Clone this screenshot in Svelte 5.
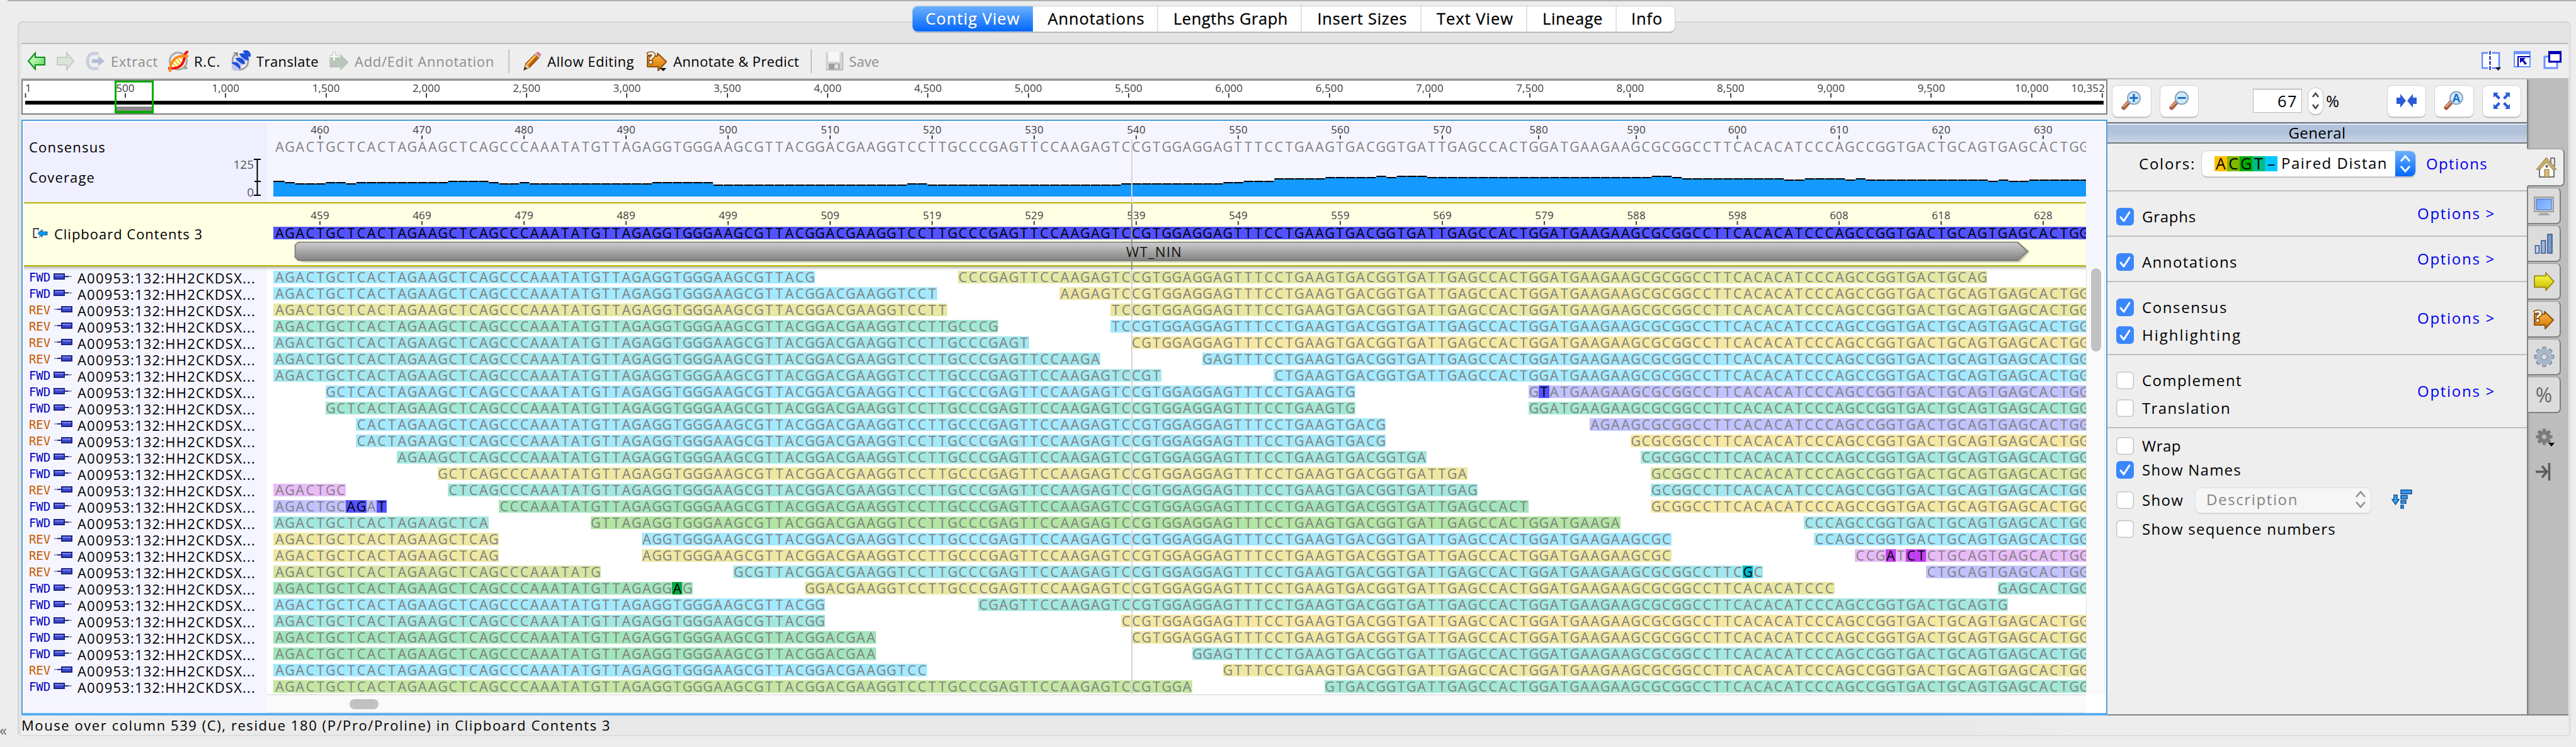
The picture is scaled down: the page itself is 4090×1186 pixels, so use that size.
<script>
  const COL = 16.195;
  const OFFSET = 1.9;
  const TRACK = 2878;
  const consensus =
    'AGACTGCTCACTAGAAGCTCAGCCCAAATATGTTAGAGGTGGGAAGCGTTACGGACGAAGGTCCTTGCCCGAGTTCCAAG' +
    'AGTCCGTGGAGGAGTTTCCTGAAGTGACGGTGATTGAGCCACTGGATGAAGAAGCGCGGCCTTCACACATCCCAGCCGGT' +
    'GACTGCAGTGAGCACTGG';

  const cyan = '#a3e9ff', aqua = '#a3e8ee', teal = '#a3e8e0', mint = '#a3e8d4', green = '#a3e5bb';
  const gold = '#f6e8a3', yellow = '#efe8a3', khaki = '#e9e8a3', lime = '#e2e8a3', leaf = '#b3e5a3';
  const lavender = '#c2c2ff', pink = '#e8bbf8';

  // [direction, ...segments]; a segment is [start, end, colour, mismatches, mismatch colour]
  const reads = [
    ['FWD', [0, 53, cyan], [67, 168, lime]],
    ['FWD', [0, 65, cyan], [77, 178, yellow]],
    ['REV', [0, 66, khaki], [82, 178, khaki]],
    ['REV', [0, 71, mint], [82, 178, cyan]],
    ['REV', [0, 74, aqua], [84, 178, gold]],
    ['REV', [0, 81, aqua], [91, 178, cyan]],
    ['FWD', [0, 87, aqua], [98, 178, cyan]],
    ['FWD', [5, 106, cyan], [123, 178, lavender, { 124: 'T' }, '#5252ff']],
    ['FWD', [5, 106, mint], [123, 178, '#a3e8cf']],
    ['REV', [8, 109, cyan], [129, 178, lavender]],
    ['REV', [8, 109, '#a4e9f8'], [133, 178, gold]],
    ['FWD', [12, 113, teal], [134, 178, teal]],
    ['FWD', [16, 117, yellow], [135, 178, '#dde8a3']],
    ['REV', [0, 7, pink], [17, 118, teal], [135, 178, aqua]],
    ['FWD', [0, 11, lavender, { 7: 'A', 8: 'G', 10: 'T' }, '#5252ff'], [22, 123, green], [135, 178, gold]],
    ['FWD', [0, 21, teal], [31, 132, leaf], [150, 178, aqua]],
    ['REV', [0, 22, yellow], [36, 137, cyan], [151, 178, cyan]],
    ['REV', [0, 22, yellow], [36, 137, yellow], [155, 178, pink, { 158: 'A', 160: 'C', 161: 'T' }, '#c23ff0']],
    ['REV', [0, 32, '#d8e6a3'], [45, 146, aqua, { 144: 'G' }, '#00b9cc'], [162, 178, lavender]],
    ['FWD', [0, 41, green, { 39: 'A' }, '#00aa44'], [52, 153, khaki], [169, 178, teal]],
    ['FWD', [0, 54, cyan], [69, 170, teal]],
    ['FWD', [0, 54, teal], [83, 178, gold]],
    ['FWD', [0, 59, green], [84, 178, yellow]],
    ['FWD', [0, 59, green], [90, 178, '#a3e8e4']],
    ['REV', [0, 64, cyan], [93, 178, yellow]],
    ['FWD', [0, 90, '#c5e6a3'], [103, 178, mint]]
  ].map(([dir, ...segs]) => {
    let at = 0;
    return {
      dir,
      segs: segs.map(([start, end, color, marks = {}, markColor]) => {
        const gap = start === 0 ? 0 : (start - at) * COL + (at === 0 ? OFFSET : 0);
        const lead = start === 0 ? OFFSET : 0;
        at = end;
        // reads that reach the edge of the view carry on over the last, partly visible column
        const letters = [...consensus.slice(start, end)].map((ch, k) => ({
          ch: marks[start + k] ?? ch,
          mark: start + k in marks
        }));
        return { gap, lead, color, markColor, letters };
      })
    };
  });

  // coverage steps: [end column, y of the step's top]
  const steps = [
    [1, 287], [2, 289], [5, 291], [7, 289], [8, 291], [17, 289], [21, 287], [22, 289], [24, 291], [25, 289],
    [37, 291], [43, 289], [62, 293], [64, 291], [83, 293], [93, 291], [95, 289], [98, 287], [103, 283],
    [108, 281], [109, 279], [110, 281], [113, 279], [135, 281], [137, 279], [138, 281], [148, 283], [150, 285],
    [154, 283], [155, 285], [156, 283], [168, 285], [169, 287], [170, 285], [172, 287], [178, 285]
  ];
  const coverage = [];
  steps.forEach(([end, y]) => {
    while (coverage.length < end) coverage.push(y - 243);
  });
  const area =
    'M0 69' + coverage.map((y, i) => `V${y + 1}H${(OFFSET + (i + 1) * COL).toFixed(1)}`).join('') + 'V69Z';

  const tickX = [74, 236, 398, 560, 722, 884, 1046, 1208, 1370, 1532, 1694, 1856, 2009, 2164, 2324.5, 2486, 2648, 2810];
  const topTicks = tickX.map((x, i) => [x, 460 + i * 10]);
  const refTicks = tickX.map((x, i) => [i === 12 ? 2018 : x, i < 13 ? 459 + i * 10 : 588 + (i - 13) * 10]);

  const overview = [];
  for (let n = 500; n <= 10000; n += 500) overview.push([4 + (n - 1) * 0.3186, n.toLocaleString('en-US')]);

  const tabs = [
    ['Contig View', 191, 150], ['Annotations', 199, 154], ['Lengths Graph', 228, 182], ['Insert Sizes', 190, 143],
    ['Text View', 168, 122], ['Lineage', 142, 96], ['Info', 92, 50]
  ];

  const sections = [
    { rows: [['Graphs', 86, true]] },
    { rows: [['Annotations', 152, true]] },
    { rows: [['Consensus', 136, true], ['Highlighting', 158, true]] },
    { rows: [['Complement', 159, false], ['Translation', 141, false]] }
  ];

  const gearTeeth = [0, 45, 90, 135, 180, 225, 270, 315];

  // spreads a label's letters so that it fills the given width
  function fit(node, width) {
    const natural = node.getBoundingClientRect().width;
    node.style.letterSpacing = `${(width - natural) / node.textContent.length}px`;
  }
</script>

{#snippet label(text, width, cls = '')}
  <span class="fit {cls}" use:fit={width}>{text}</span>
{/snippet}

{#snippet checkbox(on)}
  <span class="check" class:on>
    {#if on}
      <svg width="28" height="28" viewBox="0 0 28 28"><path d="M7 15 L12 21 L21 7" fill="none" stroke="#fff" stroke-width="3" stroke-linecap="round" stroke-linejoin="round" /></svg>
    {/if}
  </span>
{/snippet}

{#snippet sequence(text)}
  {#each text as ch}<i>{ch}</i>{/each}
{/snippet}

{#snippet lens(sign)}
  <svg width="34" height="32" viewBox="0 0 34 32">
    <path d="M5 27 L13 18" stroke="#a85a3c" stroke-width="7" stroke-linecap="round" />
    <path d="M5 25 L12 18" stroke="#d99a7c" stroke-width="3" stroke-linecap="round" />
    <circle cx="21" cy="11.500" r="10" fill="#cfe9ff" stroke="#8ba3bd" stroke-width="2" />
    {#if sign === 'A'}
      <text x="21" y="18" text-anchor="middle" class="lens-a">A</text>
    {:else}
      <path d={sign === '+' ? 'M14.500 11.500h13M21 5v13' : 'M14.500 11.500h13'} stroke="#1c6fc4" stroke-width="3" />
    {/if}
  </svg>
{/snippet}

{#snippet predict(w, menu)}
  <svg width={w} height="34" viewBox="0 0 34 34">
    <path d="M2 9h16V4.500L32 18 19 32v-6H2z" fill="url(#orange)" stroke="#8a5210" stroke-width="2" stroke-linejoin="round" />
    <text x="2" y="21" class="q">?</text>
    {#if menu}<path d="M22 28h10l-5 5z" />{/if}
  </svg>
{/snippet}

{#snippet gear(fill, edge, size)}
  <svg width={size} height={size} viewBox="-16 -16 32 32">
    <g fill={edge}>
      {#each gearTeeth as a}<path d="M-3.800 -9 L-2.800 -15.500 H2.800 L3.800 -9Z" transform="rotate({a})" />{/each}
    </g>
    <circle r="8" fill="none" stroke={fill} stroke-width="6.500" />
    <circle r="4.500" fill="none" stroke={edge} stroke-width="1" />
    <g fill={fill}>
      {#each gearTeeth as a}<path d="M-2.500 -9 L-2 -14 H2 L2.500 -9Z" transform="rotate({a})" />{/each}
    </g>
  </svg>
{/snippet}

<div class="app">
  <svg class="defs" width="0" height="0">
    <defs>
      <linearGradient id="orange" x2="0" y2="1"><stop offset="0" stop-color="#ffb84a" /><stop offset="1" stop-color="#d27200" /></linearGradient>
      <linearGradient id="greenArrow" x2="1" y2="1"><stop offset="0" stop-color="#d9ffd6" /><stop offset="0.500" stop-color="#a4f09c" /><stop offset="1" stop-color="#48cc48" /></linearGradient>
      <linearGradient id="yellowArrow" x2="0" y2="1"><stop offset="0" stop-color="#ffff50" /><stop offset="1" stop-color="#c8b800" /></linearGradient>
      <linearGradient id="greyBar" x2="0" y2="1"><stop offset="0" stop-color="#cdcdcd" /><stop offset="1" stop-color="#828282" /></linearGradient>
      <linearGradient id="screen" x2="1" y2="1"><stop offset="0" stop-color="#6ba2ff" /><stop offset="1" stop-color="#9cc4ff" /></linearGradient>
      <linearGradient id="bars" x2="1" y2="0"><stop offset="0" stop-color="#c8dcf5" /><stop offset="1" stop-color="#6d8fc4" /></linearGradient>
    </defs>
  </svg>
  <div class="topline"></div>
  <nav class="tabs">
    {#each tabs as [name, width, textWidth], i}
      <div class="tab" class:active={i === 0} style:width="{width}px">{@render label(name, textWidth)}</div>
    {/each}
  </nav>

  <section class="panel">
    <div class="toolbar">
      <svg width="30" height="30" viewBox="0 0 30 30"><path d="M2 15 13 2v7h15v12H13v7z" fill="url(#greenArrow)" stroke="#108c1c" stroke-width="2" /></svg>
      <svg width="30" height="30" viewBox="0 0 30 30"><path d="M28 15 17 2v7H2v12h15v7z" fill="#dbe5db" stroke="#c2cec2" stroke-width="2" /></svg>
      <div class="tool dim">
        <svg width="32" height="32" viewBox="0 0 32 32"><path d="M19 6.500V4H12Q4 6 4 16t8 12h7v-2.500" fill="none" stroke="#c9cfde" stroke-width="5" /><path d="M11 13h10V8l10 8-10 8v-5H11z" fill="#b4bfd6" /></svg>
        {@render label('Extract', 75)}
      </div>
      <div class="tool">
        <svg width="32" height="34" viewBox="0 0 32 34"><circle cx="16" cy="17" r="13.500" fill="none" stroke="#a9a9a9" stroke-width="3" /><path d="M26 23l6 6-7 1z" fill="#a0a0a0" /><path d="M4 30C4 14 13 9 28 9 26 24 18 29 4 30z" fill="#fff" /><path d="M9 15l12 12M14 12l10 11M19 10l7 8M7 20l8 9" stroke="#ffcf20" stroke-width="2.500" /><path d="M0 28.500h8C19 28 25 21 26 10c0-5 2-7 6-8" fill="none" stroke="#f01010" stroke-width="4" /><path d="M3 34C3 17 12 9 23 9h9" fill="none" stroke="#ff8a1c" stroke-width="4" /></svg>
        {@render label('R.C.', 42)}
      </div>
      <div class="tool">
        <svg width="32" height="34" viewBox="0 0 32 34"><path d="M6 24A13 13 0 0 1 8 6M25 9a13 13 0 0 1-13 21" fill="none" stroke="#a3a3a3" stroke-width="3" /><path d="M4 3h8v8z" fill="#8f8f8f" /><path d="M8 26 25 7" stroke="#c0c4ee" stroke-width="13" stroke-linecap="round" /><path d="M3 20c7-2 11 2 12 8-3-1-4-5-12-8zM9 13c8-2 12 2 13 8-4 0-8-3-13-8zM15 6c7-2 13 2 13 9-4 0-9-4-13-9zM21 1c5-2 11 2 10 8-4 0-7-3-10-8z" fill="#1c50d8" stroke="#1c50d8" stroke-width="2" stroke-linejoin="round" /></svg>
        {@render label('Translate', 99)}
      </div>
      <div class="tool dim">
        <svg width="32" height="34" viewBox="0 0 34 34"><path d="M2 12h18V6l13 13-13 13v-5H2z" fill="#bac6ba" stroke="#b3beb3" /><path d="M9 1v16M2 9h14" stroke="#c0c8c0" stroke-width="5" /><path d="M9 2v14M3 9h12" stroke="#fff" stroke-width="2.500" /></svg>
        {@render label('Add/Edit Annotation', 222)}
      </div>
      <div class="rule"></div>
      <div class="tool">
        <svg width="29" height="30" viewBox="0 0 29 30"><path d="M1 29 4 19 19 4l6 5L10 25z" fill="#f0951f" stroke="#8a4a10" stroke-width="1.500" /><path d="m8 24 14-16" stroke="#b85808" stroke-width="3" /><path d="m6 20 13-14" stroke="#ffc860" stroke-width="2.500" /><path d="m18 4 2-2 7 5-2 3z" fill="#b9bcc8" /><path d="m20 2 3-2 5 4-1 4z" fill="#ee6a7c" /><path d="M4 20l6 5-9 4z" fill="#e8c8a0" /><path d="M1 29l1-5 4 3z" fill="#222" /></svg>
        {@render label('Allow Editing', 138)}
      </div>
      <div class="tool predict">
        {@render predict(34, true)}
        {@render label('Annotate & Predict', 200)}
      </div>
      <div class="rule tight"></div>
      <div class="tool dim">
        <svg width="29" height="30" viewBox="0 0 29 30"><path d="M1 1h27v28H3l-2-2z" fill="#d4d4d4" /><path d="M28 1v28H1" fill="none" stroke="#bdbdbd" stroke-width="2" /><path d="M5 1h18v15H5z" fill="#f6f6f6" /><path d="M6 19h17v9H6z" fill="#9f9f9f" /><path d="M15 20h6v7h-6z" fill="#e2e2e2" /></svg>
        {@render label('Save', 48)}
      </div>
      <div class="window-icons">
        <svg width="31" height="32" viewBox="0 0 31 32"><path d="M1 3h27v24H1z" fill="#fff" stroke="#5c86ff" stroke-width="2.500" /><path d="M13.500 0v30" stroke="#fff" stroke-width="6" /><path d="M13.500 0v31" stroke="#0000a0" stroke-width="2" stroke-dasharray="6 2" /><path d="M22 26h9l-4.500 5z" /></svg>
        <svg width="27" height="28" viewBox="0 0 27 28"><path d="M1 2h25v23H1z" fill="#fff" stroke="#6a92ff" stroke-width="2" /><path d="M0 0h27v5H0z" fill="#6a92ff" /><path d="M7 25V9h19" fill="none" stroke="#0000b4" stroke-width="2" /><path d="M10 11h9l-3 3 5 6-3 2-4-6-4 3z" fill="#0000b4" /></svg>
        <svg width="30" height="30" viewBox="0 0 30 30"><path d="M2 9h20v18H2z" fill="#fff" stroke="#6a92ff" stroke-width="3" /><path d="M9.500 2h18v15h-18z" fill="#fff" stroke="#0000b4" stroke-width="3" /><path d="M8 0h21v5H8z" fill="#0000b4" /></svg>
      </div>
    </div>

    <div class="main">
      <div class="viewer">
        <div class="overview">
          <svg width="3308" height="52">
            <path d="M4 32h3300v6H4z" />
            <path d="M148 42h59v7h-59z" fill="#8c8c8c" stroke="#666" />
            <text x="4" y="18">1</text>
            <path d="M4.500 20v7" class="tick" />
            {#each overview as [x, n]}
              <text {x} y="18" text-anchor="middle">{n}</text>
              <path d="M{Math.round(x)} 20v7" class="tick" />
            {/each}
            <text x="3306" y="18" text-anchor="end">10,352</text>
            <path d="M3302 20v7" class="tick" />
            <path d="M147.500 1.500h59v48.500h-59z" fill="none" stroke="#00aa00" stroke-width="3" />
            <path d="M146 48h62v4h-62z" fill="#00aa00" />
          </svg>
        </div>

        <div class="alignment">
          <div class="cursor"></div>
          <div class="band consensus">
            <div class="names">
              <div class="titles">
                {@render label('Consensus', 122)}
                {@render label('Coverage', 105)}
              </div>
              <svg width="54" height="127">
                <text x="33" y="74" text-anchor="end" class="axis">125</text>
                <text x="33" y="117.500" text-anchor="end" class="axis">0</text>
                <path d="M33 59h11M38.500 59v57M34 94h10M33 116h11" stroke="#000" stroke-width="2" fill="none" />
              </svg>
            </div>
            <div class="track">
              <svg width={TRACK} height="29">
                {#each topTicks as [x, n]}
                  <text {x} y="18" text-anchor="middle">{n}</text>
                  <path d="M{x} 21v6" class="tick" />
                {/each}
              </svg>
              <div class="seq">{@render sequence(consensus)}</div>
              <svg width={TRACK} height="69">
                <path d={area} fill="#1399ff" />
                {#each coverage as y, i}
                  <path d="M{i === 0 ? 0 : OFFSET + i * COL + 0.5} {y + 1}H{OFFSET + (i + 1) * COL - 0.5}" stroke="#000" stroke-width="2" />
                {/each}
              </svg>
            </div>
          </div>

          <div class="band reference">
            <div class="names">
              <svg width="24" height="18" viewBox="0 0 24 18"><path d="M10 1H1.500v14H7" fill="#fff" stroke="#444" stroke-width="2" /><path d="M9 2v3M11 12v4" stroke="#aaa" stroke-width="2" /><path d="M8 8.500l7-6v3.500h8v5h-8v3.500z" fill="#0c9bff" stroke="#06518c" /></svg>
              {@render label('Clipboard Contents 3', 236)}
            </div>
            <div class="track">
              <svg width={TRACK} height="37">
                {#each refTicks as [x, n]}
                  <text {x} y="25" text-anchor="middle">{n}</text>
                  <path d="M{x} 28v6" class="tick" />
                {/each}
              </svg>
              <div class="seq">{@render sequence(consensus)}</div>
              <svg width={TRACK} height="41">
                <path d="M38 11l6-5H2773l16 14-16 17H46l-8-8z" fill="#d8d8bc" />
                <path d="M36 9l6-5H2771l17 15-16 16H43l-7-7z" fill="#b4b49c" />
                <path d="M34.500 9l5-4.500H2769L2784.500 19 2769 33.500H39.500l-5-5z" fill="url(#greyBar)" stroke="#747474" stroke-width="1.500" />
                <text x="1398" y="28" text-anchor="middle" class="feature" textLength="88">WT_NIN</text>
              </svg>
            </div>
            <div class="side"></div>
          </div>

          <div class="reads">
            <div class="names">
              {#each reads as { dir }}
                <div class="name">
                  <span class="dir" class:rev={dir === 'REV'}>{@render label(dir, 34)}</span>
                  <svg width="30" height="10" viewBox="0 0 30 10" class:flip={dir === 'REV'}>
                    <path d="M18 5h6" stroke="#2a2a80" stroke-width="2" /><path d="M24 5h5" stroke="#9a9ac4" stroke-width="2" /><path d="M1 1h16v8H1z" fill="#3b48cc" stroke="#1c2488" stroke-width="2" /><path d="M2 3h14" stroke="#7c86f0" stroke-width="2" />
                  </svg>
                  {@render label('A00953:132:HH2CKDSX...', 283)}
                </div>
              {/each}
            </div>
            <div class="rows">
              {#each reads as { segs }}
                <div class="row">
                  {#each segs as s}
                    <div class="seg" style:margin-left="{s.gap}px" style:padding-left="{s.lead}px" style:background={s.color}>
                      {#each s.letters as l}{#if l.mark}<i class="mark" style:background={s.markColor}>{l.ch}</i>{:else}<i>{l.ch}</i>{/if}{/each}
                    </div>
                  {/each}
                </div>
              {/each}
            </div>
            <div class="vscroll"><div></div></div>
          </div>
          <div class="bottom">
            <div class="blank"></div>
            <div class="hscroll"><div></div></div>
            <div class="corner"></div>
          </div>
        </div>
      </div>

      <aside class="options">
        <div class="zoombar">
          <div class="btn">{@render lens('+')}</div>
          <div class="btn">{@render lens('-')}</div>
          <div class="percent">{@render label('67', 32)}</div>
          <div class="spinner"><svg width="23" height="40" viewBox="0 0 23 40"><path d="m7 14 4.500-6L16 14M7 26l4.500 6 4.500-6" fill="none" stroke="#444" stroke-width="2.500" /></svg></div>
          {@render label('%', 20)}
          <div class="push"></div>
          <div class="btn"><svg width="34" height="28" viewBox="0 0 34 28"><path d="M1 9h6V3l9 11-9 11v-6H1zM33 9h-6V3l-9 11 9 11v-6h6z" fill="#2a5bd8" /></svg></div>
          <div class="btn">{@render lens('A')}</div>
          <div class="btn"><svg width="28" height="28" viewBox="0 0 28 28"><path d="M1 1h8L6.500 3.500 12 9l-3 3-5.500-5.500L1 9zM27 1h-8l2.500 2.500L16 9l3 3 5.500-5.500L27 9zM1 27h8l-2.500-2.500L12 19l-3-3-5.500 5.500L1 19zM27 27h-8l2.500-2.500L16 19l3-3 5.500 5.500L27 19z" fill="#2a5bd8" /></svg></div>
        </div>
        <div class="heading">{@render label('General', 91)}</div>
        <div class="colors">
          {@render label('Colors:', 90)}
          <div class="select">
            <div class="swatches"><b>A</b><b>C</b><b>G</b><b>T</b><b>–</b></div>
            <div class="clip">{@render label('Paired Distance', 197)}</div>
            <div class="arrows"><svg width="32" height="40" viewBox="0 0 32 40"><path d="m9 16 7-8 7 8M9 24l7 8 7-8" fill="none" stroke="#fff" stroke-width="3" /></svg></div>
          </div>
          {@render label('Options', 98, 'link')}
        </div>
        {#each sections as { rows }}
          <div class="section">
            <div class="checks">
              {#each rows as [name, width, on]}
                <div class="line">{@render checkbox(on)}{@render label(name, width)}</div>
              {/each}
            </div>
            {@render label('Options >', 124, 'link')}
          </div>
        {/each}
        <div class="section last">
          <div class="line">{@render checkbox(false)}{@render label('Wrap', 62)}</div>
          <div class="line">{@render checkbox(true)}{@render label('Show Names', 158)}</div>
          <div class="line show">
            {@render checkbox(false)}{@render label('Show', 66)}
            <div class="select disabled">
              {@render label('Description', 146)}
              <svg width="18" height="30" viewBox="0 0 18 30"><path d="m2 11 7-8 7 8M2 19l7 8 7-8" fill="none" stroke="#8e8e8e" stroke-width="2.500" /></svg>
            </div>
            <svg width="34" height="32" viewBox="0 0 34 32"><g fill="#3a97e8" stroke="#0b4f9c" stroke-width="1.500"><path d="M15 1h17v6H15zM15 9.500h10v5.500H15zM15 17.500h8V22h-8zM15 25h4v5h-4z" /><path d="M4 9h5v7h3l-5.500 8L1 16h3z" fill="#32a8f0" /></g></svg>
          </div>
          <div class="line">{@render checkbox(false)}{@render label('Show sequence numbers', 308)}</div>
        </div>
      </aside>

      <div class="strip">
        <div class="side-tab home">
          <svg width="34" height="34" viewBox="0 0 34 34"><path d="M24 2h6v12h-6z" fill="#eee" stroke="#555" stroke-width="1.500" /><path d="M6 17v15h23V17L17 6z" fill="#fff" stroke="#444" stroke-width="1.500" /><path d="M1 20 17 1l16 19h-6L17 9 7 20z" fill="#c9ae6a" stroke="#8c7434" /><path d="M14 20h7v12h-7z" fill="#d6bc7a" stroke="#8c7434" /><path d="M16 13h3v4h-3z" fill="#555" /></svg>
        </div>
        <div class="side-tab"><svg width="32" height="32" viewBox="0 0 32 32"><path d="M1 2h30v23H1z" fill="#d2d2d2" stroke="#8a8a8a" stroke-width="1.500" /><path d="M4 5h24v17H4z" fill="url(#screen)" stroke="#3c6cc8" /><path d="M10 27h12l4 4H6z" fill="#a8a8a8" /></svg></div>
        <div class="side-tab"><svg width="30" height="32" viewBox="0 0 30 32"><g fill="url(#bars)" stroke="#34548c" stroke-width="1.500"><path d="M1.500 19h6v12h-6zM11 11h6.500v20H11zM21 1h7v30h-7z" /></g></svg></div>
        <div class="side-tab"><svg width="33" height="30" viewBox="0 0 33 30"><path d="M1 6h18V1l13 14-13 14v-5H1z" fill="url(#yellowArrow)" stroke="#8c7c00" stroke-width="1.500" /></svg></div>
        <div class="side-tab">{@render predict(34, false)}</div>
        <div class="side-tab">{@render gear('#a9b9cc', '#76879c', 33)}</div>
        <div class="side-tab pct">%</div>
        <div class="tools">
          <div class="gear-menu">{@render gear('#7c7c7c', '#7c7c7c', 27)}<svg class="caret" width="10" height="6"><path d="M0 0h10L5 6z" /></svg></div>
          <svg width="24" height="28" viewBox="0 0 24 28"><path d="M0 14h16M10 5l8 9-8 9M21.500 0v28" fill="none" stroke="#5c5c5c" stroke-width="3.500" /></svg>
        </div>
      </div>
    </div>

    <footer>{@render label('Mouse over column 539 (C), residue 180 (P/Pro/Proline) in Clipboard Contents 3', 936)}</footer>
  </section>
  <div class="collapse">«</div>
</div>

<style>
  :global(body) { background: #ededed; overflow: hidden; }
  .app {
    width: 4090px; height: 1186px; overflow: hidden; position: relative; background: #ededed;
    font: 22px/24px "Open Sans", "Noto Sans", sans-serif; color: #000;
  }
  svg { display: block; flex: none; }
  .defs { position: absolute; }
  .fit { display: inline-block; white-space: pre; flex: none; }
  .topline { height: 2px; margin-left: 12px; background: #b0b0b0; }

  .tabs {
    position: relative; z-index: 1; display: flex; box-sizing: border-box; width: 1210px; height: 40px;
    margin: 8px 0 0 1449px; background: #fff; border-radius: 8px; overflow: hidden;
    box-shadow: 0 0 0 1px #cfcfcf, 0 2px 1px #a5a5a5; font-size: 25.5px; line-height: 39px;
  }
  .tab { box-sizing: border-box; display: flex; justify-content: center; padding-left: 4px; border-right: 2px solid #e2e2e2; -webkit-text-stroke: 0.3px; }
  .tab:last-child { border-right: 0; }
  .tab.active { padding-left: 0; color: #fff; background: linear-gradient(#6cb0fd, #0067ff); border-right: 0; text-shadow: 0 1px 1px rgba(0, 0, 60, 0.4); }

  .panel {
    box-sizing: border-box; width: 4054px; height: 1135px; margin: -16px 0 0 28px; padding: 32px 2px 0 4px;
    border: 2px solid #d3d3d3; border-right-color: #dedede; border-bottom-color: #dcdcdc; border-radius: 8px; background: #e4e4e4;
  }
  .toolbar {
    box-sizing: border-box; display: flex; align-items: center; gap: 16px; height: 58px; padding: 0 10px 0 9px;
    border-top: 2px solid #bdbdbd; border-bottom: 2px solid #bdbdbd; background: #eee;
  }
  .tool { display: flex; align-items: center; gap: 9px; white-space: nowrap; }
  .dim { color: #8c8c8c; }
  .predict { margin-left: 3px; }
  .rule { width: 2px; height: 38px; margin: 0 6px; background: #c2c2c2; }
  .rule.tight { margin: 0 5px 0 2px; }
  .window-icons { display: flex; gap: 20px; margin-left: auto; }

  .main { display: grid; grid-template-columns: 3312px 666px 66px; height: 1010px; background: #eee; }
  .viewer { display: flex; flex-direction: column; gap: 8px; }
  .overview { height: 52px; border: 2px solid #808080; background: #fff; }
  svg text { font-size: 17px; fill: #3c3c3c; letter-spacing: 0.1px; }
  svg text.axis { font-size: 19px; fill: #555; letter-spacing: 0; }
  svg text.feature { font-size: 22px; fill: #111; }
  svg text.q { font: bold 25px "Open Sans", sans-serif; fill: #fff; stroke: #8a5210; stroke-width: 3px; paint-order: stroke; }
  svg text.lens-a { font: bold 18px "Open Sans", sans-serif; fill: #1c6fc4; }
  .tick { stroke: #444; stroke-width: 2; fill: none; }

  .alignment { position: relative; box-sizing: border-box; height: 946px; padding: 2px 2px 0; border: 2px solid #4c9fe0; border-bottom: 4px solid #5baef0; background: #fff; }
  .cursor { position: absolute; z-index: 2; left: 1760px; top: 29px; width: 2px; height: 881px; background: linear-gradient(#d4d4d8 102px, #8e8e8e 102px, #8e8e8e 207px, #d4d4d8 207px); }
  .band { display: grid; grid-template-columns: 386px 2888px 30px; }
  .band .track { padding-left: 10px; overflow: hidden; }
  .consensus { height: 127px; background: #f5f5ff; }
  .consensus .names { display: flex; justify-content: space-between; background: #efefff; }
  .titles { display: flex; flex-direction: column; align-items: flex-start; gap: 24px; padding: 27px 0 0 8px; }
  .seq { display: flex; height: 20px; padding-left: 1.9px; line-height: 20px; color: #808080; }
  i { flex: 0 0 16.195px; width: 16.195px; display: flex; justify-content: center; font-style: normal; font-size: 21.5px; }
  .reference { height: 102px; }
  .reference .names, .reference .track { box-sizing: border-box; height: 102px; background: #ffffe4; border-top: 2px solid #b3b300; border-bottom: 2px solid #b3b300; }
  .reference .names { display: flex; align-items: center; gap: 10px; padding-left: 14px; padding-bottom: 2px; }
  .reference .seq { background: #5252ff; color: #000; }
  .side { background: #f5f5ff; }

  .reads { position: relative; display: grid; grid-template-columns: 386px 2888px 30px; height: 679px; overflow: hidden; }
  .reads .names { padding: 7px 0 0 8px; background: linear-gradient(#b8b8b8, #f5f5ff 6px); }
  .name { display: flex; height: 26px; line-height: 23px; }
  .name svg { margin: 4px 8px 0 5px; }
  .flip { transform: scaleX(-1); }
  .dir { width: 34px; height: 20px; overflow: hidden; font: 19px/20px "DejaVu Sans Mono", monospace; color: #0000c0; }
  .dir.rev { color: #c85a00; }
  .rows { padding: 7px 0 0 10px; overflow: hidden; background: linear-gradient(#b8b8b8, #fff 6px); }
  .row { display: flex; height: 20px; margin-bottom: 6px; line-height: 20px; color: #808080; }
  .seg { display: flex; flex: none; }
  .mark { color: #000; }
  .vscroll { padding: 3px 7px; background: #fafafa; border-left: 1px solid #e4e4e4; border-right: 1px solid #e8e8e8; box-sizing: border-box; }
  .vscroll div { width: 16px; height: 132px; border-radius: 8px; background: #c1c1c1; }
  .bottom { display: grid; grid-template-columns: 386px 2888px 30px; height: 30px; }
  .blank { background: #f5f5ff; }
  .hscroll { box-sizing: border-box; padding: 6px 0 0 131px; background: #fafafa; border-top: 2px solid #e6e6e6; border-bottom: 2px solid #ececec; }
  .hscroll div { width: 46px; height: 16px; border-radius: 8px; background: #c1c1c1; }
  .corner { background: #fff; }

  .options { display: flex; flex-direction: column; font-size: 24px; border-bottom: 2px solid #808080; background: #eee; box-sizing: border-box; }
  .zoombar { display: flex; align-items: center; box-sizing: border-box; height: 68px; padding: 0 10px 0 8px; gap: 15px; font-size: 25.5px; }
  .btn { display: grid; place-items: center; width: 60.5px; height: 49px; border-radius: 8px; background: #fff; box-shadow: 0 0 0 1px #d0d0d0, 0 2px 1px #b0b0b0; }
  .percent { display: flex; justify-content: flex-end; box-sizing: border-box; width: 78px; height: 38px; margin-left: 72px; padding: 0 6px; border: 1px solid #bbb; border-top-color: #999; background: #fff; line-height: 36px; }
  .spinner { width: 23px; height: 41px; margin: 0 -10px 0 -5px; border-radius: 11px; background: #fff; box-shadow: 0 0 0 1px #c8c8c8, 0 2px 1px #b0b0b0; }
  .push { flex: 1; }
  .heading { display: flex; justify-content: center; box-sizing: border-box; height: 34px; line-height: 29px; border-top: 2px solid #5f6b7c; border-bottom: 2px solid #74787e; background: linear-gradient(#e8eef6 2px, #b0c3db 2px, #b0c3db 50%, #cbd6e6); }
  .colors { display: flex; align-items: center; box-sizing: border-box; height: 76px; padding: 0 0 10px 50px; gap: 10px; border-bottom: 2px solid #bfbfbf; }
  .select { display: flex; align-items: center; box-sizing: border-box; width: 339px; height: 40px; padding-left: 20px; border-radius: 8px; overflow: hidden; background: #fff; box-shadow: 0 0 0 1px #cfcfcf, 0 2px 1px #b0b0b0; }
  .colors .select { flex: none; }
  .colors :global(.link) { margin-left: 7px; }
  .swatches { display: flex; height: 24px; line-height: 22px; margin-bottom: 1px; font-size: 25px; }
  .swatches b { display: flex; justify-content: center; width: 20px; font-weight: 400; }
  .swatches b:nth-child(1) { background: #ffc000; }
  .swatches b:nth-child(2) { background: #80b800; }
  .swatches b:nth-child(3) { background: #00ac00; }
  .swatches b:nth-child(4) { background: #00bb80; }
  .swatches b:nth-child(5) { background: #00c8ff; }
  .clip { width: 169px; margin: 0 12px 3px 6px; overflow: hidden; white-space: nowrap; line-height: 30px; }
  .arrows { background: linear-gradient(#6cb0fd, #0067ff); }
  .link { color: #0000ee; }
  .section { display: flex; justify-content: space-between; align-items: center; box-sizing: border-box; padding: 26px 50px 16px 14px; border-bottom: 2px solid #bfbfbf; }
  .section > .link { margin-top: -10px; }
  .checks { display: flex; flex-direction: column; gap: 16px; }
  .line { display: flex; align-items: center; gap: 13px; height: 28px; }
  .section.last { flex-direction: column; justify-content: flex-start; align-items: flex-start; gap: 10px; padding: 14px 0 0 14px; border: 0; }
  .show { margin: 10px 0 8px; }
  .select.disabled { width: 278px; height: 39px; margin-left: 6px; padding: 0 7px 3px 17px; justify-content: space-between; background: #f6f6f6; color: #858585; box-shadow: 0 0 0 1px #dcdcdc, 0 2px 1px #cfcfcf; }
  .show > svg { margin: -2px 0 0 20px; }
  .check { width: 28px; height: 28px; border-radius: 6px; background: #fff; box-shadow: inset 0 0 0 1.5px #c4c4c4; }
  .check.on { background: #3b87fd; box-shadow: none; }

  .strip { box-sizing: border-box; padding-top: 110px; background: linear-gradient(90deg, #808080 2px, #a8a8a8 2px, #b4b4b4 5px, #bdbdbd 5px); border-bottom: 2px solid #808080; }
  .side-tab { display: grid; place-items: center; box-sizing: border-box; width: 54px; height: 58px; margin-top: 2px; border: 2px solid #808080; border-top: 1px solid #999; border-radius: 0 7px 7px 0; background: #dcdcdc; }
  .side-tab.home { width: 60px; height: 60px; margin-top: 0; border-left-color: #eee; background: #eee; padding-left: 2px; }
  .pct { font-size: 32px; color: #666; }
  .tools { display: flex; flex-direction: column; gap: 28px; padding: 24px 0 0 14px; }
  .gear-menu { position: relative; width: 27px; height: 27px; }
  .caret { position: absolute; left: 20px; top: 23px; }

  footer { height: 31px; line-height: 31px; background: linear-gradient(90deg, #efefef, #e8e8e8 600px, #e8e8e8 3000px, #ededed 3300px); }
  .collapse { margin-top: -20px; font-size: 24px; color: #666; line-height: 20px; margin-left: -1px; }
</style>
